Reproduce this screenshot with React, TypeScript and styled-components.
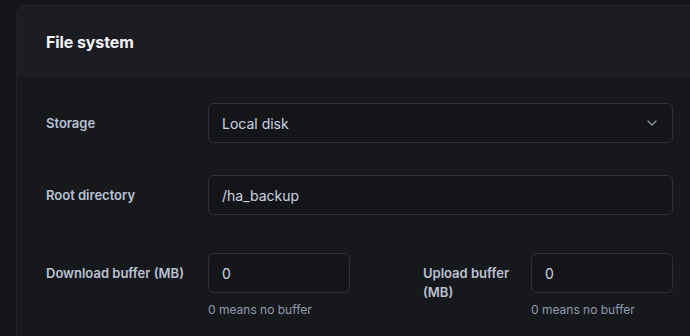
import React from "react";
import styled, { createGlobalStyle } from "styled-components";

const Global = createGlobalStyle`
  html, body { margin: 0; padding: 0; background: #141519; overflow: hidden; }
  body { font-family: Inter, "Noto Sans", sans-serif; -webkit-font-smoothing: antialiased; }
`;

const Page = styled.div`
  width: 690px;
  height: 336px;
  padding: 5px 0 0 16px;
  box-sizing: border-box;
  overflow: hidden;
`;

const Card = styled.section`
  width: 700px;
  height: 360px;
  background: #17181c;
  border: 1px solid #202127;
  border-radius: 8px;
  box-sizing: border-box;
  overflow: hidden;
`;

const Header = styled.header`
  height: 72px;
  background: #1c1d22;
  display: flex;
  align-items: center;
  padding: 0 29px;
`;

const Title = styled.h2`
  margin: 0;
  font-size: 16px;
  font-weight: 700;
  color: #f2f4f8;
  letter-spacing: -0.1px;
`;

const Body = styled.div`
  padding: 25px 30px 0 29px;
  width: 627px;
  display: flex;
  flex-direction: column;
`;

const Row = styled.div<{ $mb: number }>`
  display: flex;
  align-items: flex-start;
  margin-bottom: ${(p) => p.$mb}px;
`;

const Split = styled.div`
  display: flex;
  justify-content: space-between;
`;

const Field = styled.div`
  display: flex;
  align-items: flex-start;
`;

const Label = styled.label<{ $w: number }>`
  width: ${(p) => p.$w}px;
  flex: none;
  padding-top: 11px;
  font-size: 13px;
  font-weight: 600;
  color: #b9c2d2;
  line-height: 19px;
`;

const Control = styled.div<{ $w?: number }>`
  width: ${(p) => (p.$w ? `${p.$w}px` : "auto")};
  flex: ${(p) => (p.$w ? "none" : "1")};
  display: flex;
  flex-direction: column;
`;

const Box = styled.div`
  height: 40px;
  box-sizing: border-box;
  border: 1px solid #2f3139;
  border-radius: 6px;
  background: #141519;
  display: flex;
  align-items: center;
  justify-content: space-between;
  padding: 0 12px 0 13px;
  font-size: 14px;
  color: #cdd5e2;
`;

const Help = styled.div`
  margin-top: 9px;
  font-size: 12px;
  color: #8f9bb0;
`;

const Chevron = () => (
  <svg width="16" height="16" viewBox="0 0 24 24" fill="none" stroke="#8c94a4" strokeWidth="2" strokeLinecap="round" strokeLinejoin="round">
    <path d="M6 9l6 6 6-6" />
  </svg>
);

export default function App() {
  return (
    <>
      <Global />
      <Page>
        <Card>
          <Header>
            <Title>File system</Title>
          </Header>
          <Body>
            <Row $mb={32}>
              <Label $w={162}>Storage</Label>
              <Control>
                <Box>
                  <span>Local disk</span>
                  <Chevron />
                </Box>
              </Control>
            </Row>
            <Row $mb={38}>
              <Label $w={162}>Root directory</Label>
              <Control>
                <Box>/ha_backup</Box>
              </Control>
            </Row>
            <Split>
              <Field>
                <Label $w={162}>Download buffer (MB)</Label>
                <Control $w={142}>
                  <Box>0</Box>
                  <Help>0 means no buffer</Help>
                </Control>
              </Field>
              <Field>
                <Label $w={108}>Upload buffer (MB)</Label>
                <Control $w={142}>
                  <Box>0</Box>
                  <Help>0 means no buffer</Help>
                </Control>
              </Field>
            </Split>
          </Body>
        </Card>
      </Page>
    </>
  );
}
